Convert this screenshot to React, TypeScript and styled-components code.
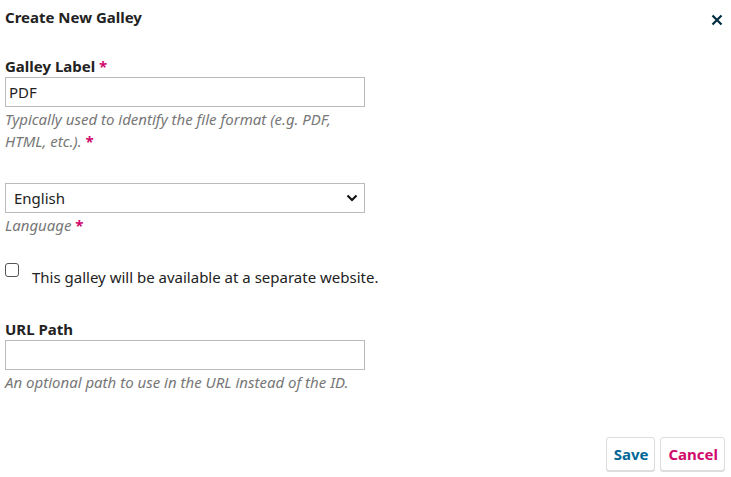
import React from "react";
import styled, { createGlobalStyle } from "styled-components";

const Global = createGlobalStyle`
  html, body { margin: 0; padding: 0; background: #fff; }
  body { font-family: "Noto Sans", sans-serif; color: #222; font-size: 15px; }
  * { box-sizing: border-box; }
`;

const Modal = styled.div`
  width: 731px;
  height: 477px;
  display: flex;
  flex-direction: column;
  padding: 0 5px;
`;

const Header = styled.div`
  display: flex;
  align-items: flex-start;
  justify-content: space-between;
  height: 35px;
  padding-top: 7px;
`;

const Title = styled.h1`
  margin: 0;
  font-size: 15px;
  font-weight: 700;
  line-height: 20px;
`;

const Close = styled.button`
  border: 0;
  background: none;
  padding: 0;
  width: 20px;
  height: 20px;
  display: flex;
  align-items: center;
  justify-content: center;
  margin-top: 3px;
  margin-right: -1px;
  color: #002c40;
  cursor: pointer;
`;

const Field = styled.div<{ $mt: number }>`
  display: flex;
  flex-direction: column;
  margin-top: ${(p) => p.$mt}px;
`;

const Label = styled.label`
  font-weight: 700;
  font-size: 15px;
  line-height: 22px;
`;

const Req = styled.span`
  color: #d00a6c;
  font-weight: 700;
  font-style: normal;
`;

const TextInput = styled.input`
  width: 360px;
  height: 30px;
  border: 1px solid #bbb;
  border-radius: 0;
  padding: 0 3px;
  font-family: "Noto Sans", sans-serif;
  font-size: 15px;
  color: #222;
  outline: none;
`;

const Select = styled.select`
  width: 360px;
  height: 30px;
  border: 1px solid #bbb;
  border-radius: 0;
  padding: 0 8px;
  font-family: "Noto Sans", sans-serif;
  font-size: 15px;
  color: #222;
  background: #fff;
  appearance: none;
  background-image: url("data:image/svg+xml,%3Csvg xmlns='http://www.w3.org/2000/svg' width='12' height='8' viewBox='0 0 12 8'%3E%3Cpath d='M1.5 1.5 L6 6 L10.5 1.5' fill='none' stroke='%23111' stroke-width='2.2'/%3E%3C/svg%3E");
  background-repeat: no-repeat;
  background-position: right 6px center;
  outline: none;
`;

const Help = styled.div`
  max-width: 360px;
  font-style: italic;
  color: #777;
  font-size: 15px;
  line-height: 22px;
  margin-top: 1px;
`;

const CheckRow = styled.label`
  display: flex;
  align-items: flex-start;
  gap: 13px;
  font-size: 15px;
  line-height: 22px;
  margin-top: 30px;
`;

const Box = styled.span`
  flex: none;
  width: 14px;
  height: 14px;
  border: 1px solid #555;
  border-radius: 3px;
  display: inline-block;
  margin-top: -3px;
`;

const Footer = styled.div`
  margin-top: auto;
  margin-bottom: 6px;
  display: flex;
  justify-content: flex-end;
  gap: 5px;
  padding-right: 1px;
`;

const Button = styled.button<{ $color: string }>`
  height: 34px;
  padding: 0 6px 0 7px;
  background: #fff;
  border: 1px solid #ddd;
  border-radius: 3px;
  box-shadow: 0 1px 0 #ddd;
  font-family: "Noto Sans", sans-serif;
  font-weight: 700;
  font-size: 15px;
  color: ${(p) => p.$color};
  cursor: pointer;
`;

export default function App() {
  return (
    <>
      <Global />
      <Modal>
        <Header>
          <Title>Create New Galley</Title>
          <Close aria-label="Close">
            <svg width="12" height="12" viewBox="0 0 12 12">
              <path d="M1.5 1.5 L10.5 10.5 M10.5 1.5 L1.5 10.5" stroke="currentColor" strokeWidth="2.2" />
            </svg>
          </Close>
        </Header>
        <Field $mt={20}>
          <Label>
            Galley Label <Req>*</Req>
          </Label>
          <TextInput defaultValue="PDF" />
          <Help>
            Typically used to identify the file format (e.g. PDF, HTML, etc.). <Req>*</Req>
          </Help>
        </Field>
        <Field $mt={31}>
          <Select defaultValue="en">
            <option value="en">English</option>
          </Select>
          <Help>
            Language <Req>*</Req>
          </Help>
        </Field>
        <CheckRow>
          <Box />
          This galley will be available at a separate website.
        </CheckRow>
        <Field $mt={30}>
          <Label>URL Path</Label>
          <TextInput />
          <Help>An optional path to use in the URL instead of the ID.</Help>
        </Field>
        <Footer>
          <Button $color="#006798">Save</Button>
          <Button $color="#d00a6c">Cancel</Button>
        </Footer>
      </Modal>
    </>
  );
}
